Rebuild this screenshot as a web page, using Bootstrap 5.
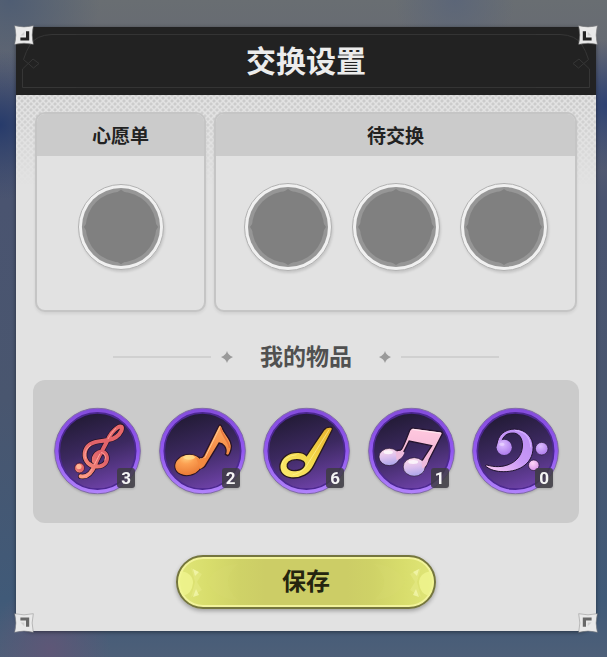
<!DOCTYPE html>
<html lang="zh-CN">
<head>
<meta charset="utf-8">
<meta name="viewport" content="width=device-width, initial-scale=1">
<title>交换设置</title>
<link href="https://cdn.jsdelivr.net/npm/bootstrap@5.3.0/dist/css/bootstrap.min.css" rel="stylesheet">
<style>
body{font-family:"Noto Sans CJK SC",sans-serif;color:#222;min-height:100vh;
 background:
 radial-gradient(circle at 0 125px,#273b6b 0,rgba(39,59,107,0) 75px),
 radial-gradient(circle at 100% 105px,#2e4273 0,rgba(46,66,115,0) 65px),
 radial-gradient(ellipse at 50px 650px,#5e5777 0,rgba(94,87,119,0) 60px),
 radial-gradient(circle at 10px 0,#4f5d73 0,rgba(79,93,115,0) 90px),
 radial-gradient(circle at 455px 0,#5c6678 0,rgba(92,102,120,0) 60px),
 linear-gradient(#696e72 0,#656873 70px,#4a5470 200px,#49566f 400px,#405a78 600px,#4d5f78 657px)}
.dialog-panel{margin:27px 11px 26px 16px;background:#e2e2e2;border-radius:18px;box-shadow:0 1px 4px rgba(0,0,0,.45)}
.dialog-top{height:68px;background:#222;border-radius:18px 18px 0 0}
.dialog-top h1{font-size:30px;font-weight:700;line-height:64px;color:#ececec}
.top-frame{inset:0}
.top-frame svg{width:60px;height:68px;flex:none}
.top-frame i{height:54px;margin-top:7px;border:solid #343434;border-width:1px 0}
.flip-x{transform:scaleX(-1)}
.flip-y{transform:scaleY(-1)}
.flip-xy{transform:scale(-1)}
.stud{width:20px;height:20px;z-index:2;color:#222}
.stud-t{top:-2px}.stud-b{bottom:-2px;color:#686868}.stud-l{left:-2px}.stud-r{right:-2px}
.dots{inset:68px 0 auto 0;height:90px;
 background:radial-gradient(circle,#c9c9c9 1px,transparent 2px) 0 0/6px 6px,radial-gradient(circle,#c9c9c9 1px,transparent 2px) 3px 3px/6px 6px;
 -webkit-mask-image:linear-gradient(#000,transparent);mask-image:linear-gradient(#000,transparent)}
.dialog-main{padding:17px 17px 22px}
.boxes{display:grid;grid-template-columns:171fr 363fr;gap:8px;padding:0 2px}
.box{border:2px solid #c5c5c5;border-radius:10px;background:#e2e2e2;box-shadow:0 2px 3px rgba(0,0,0,.07);height:200px}
.box h2{margin:0;background:#cbcbcb;border-radius:8px 8px 0 0;font-size:19px;font-weight:700;line-height:42px}
.slots{gap:20px;padding-top:27px}
.slot-btn{border:0;padding:0;background:none;border-radius:50%;line-height:0;filter:drop-shadow(1px 2px 1px rgba(0,0,0,.12))}
.slot-btn svg{width:88px;height:88px}
.slot-small svg{width:86px;height:86px;margin-top:1px}
.heading{margin-top:28px;gap:10px;color:#9a9a9a}
.heading i{width:98px;height:2px;background:#d0d0d0}
.heading svg{width:12px;height:12px}
.heading h2{font-size:23px;font-weight:700;line-height:30px;padding-bottom:4px;color:#505050;margin:0 17px}
.bag{margin-top:6px;padding:27px 20px 28px 21px;background:#cbcbcb;border-radius:12px}
.item-btn{border:0;padding:0;background:none;border-radius:50%;line-height:0;filter:drop-shadow(0 1px 1px rgba(0,0,0,.2))}
.item-btn svg{width:87px;height:88px}
.count{right:6px;bottom:7px;padding:0 4px;border-radius:3px;background:rgba(62,59,67,.86);color:#f4f4f4;font:700 17px/20px Roboto,sans-serif}
.save{width:260px;height:54px;margin-top:32px;border:2px solid #74753e;border-radius:27px;overflow:hidden;
 color:#25250f;font-size:24px;font-weight:700;line-height:46px;
 background:linear-gradient(90deg,#e0e678,#d8dd6c 12%,#cfd267 24%,#cccd66 34%,#cccd66 66%,#cfd267 76%,#d8dd6c 88%,#e0e678);
 box-shadow:inset 0 0 0 2px #f2f39c,0 2px 4px rgba(0,0,0,.3)}
.save svg{top:0;width:60px;height:50px}
.save span{padding-bottom:4px}
</style>
<script src="https://cdn.jsdelivr.net/npm/bootstrap@5.3.0/dist/js/bootstrap.bundle.min.js"></script>
</head>
<body>
<svg width="0" height="0" class="position-absolute" aria-hidden="true">
 <defs>
  <linearGradient id="disc" x1=".3" y1="0" x2=".6" y2="1"><stop offset="0" stop-color="#211a33"/><stop offset=".5" stop-color="#3c2960"/><stop offset="1" stop-color="#6e42a8"/></linearGradient>
  <linearGradient id="rim" x1="0" y1="0" x2="0" y2="1"><stop offset="0" stop-color="#844cdc"/><stop offset=".5" stop-color="#9258f0"/><stop offset="1" stop-color="#b183fb"/></linearGradient>
  <linearGradient id="red" x1="1" y1="0" x2="0" y2="1"><stop offset="0" stop-color="#e8686a"/><stop offset=".55" stop-color="#e0626a"/><stop offset="1" stop-color="#ff9c80"/></linearGradient>
  <linearGradient id="orange" x1="0" y1="0" x2="0" y2="1"><stop offset="0" stop-color="#ffa860"/><stop offset="1" stop-color="#ee7c38"/></linearGradient>
  <radialGradient id="orangeHead" cx=".5" cy=".15" r=".85"><stop offset="0" stop-color="#ffd080"/><stop offset=".35" stop-color="#fca052"/><stop offset="1" stop-color="#e87834"/></radialGradient>
  <linearGradient id="yellow" x1="0" y1="1" x2="1" y2="0"><stop offset="0" stop-color="#fcec70"/><stop offset=".5" stop-color="#f2d648"/><stop offset="1" stop-color="#e8b02e"/></linearGradient>
  <linearGradient id="pink" x1="0" y1="0" x2="0" y2="1"><stop offset="0" stop-color="#ffc8de"/><stop offset="1" stop-color="#eeb0d4"/></linearGradient>
  <linearGradient id="pinkHead" x1=".4" y1="0" x2=".6" y2="1"><stop offset="0" stop-color="#ffdcea"/><stop offset=".5" stop-color="#dcc0ee"/><stop offset="1" stop-color="#a9a4ea"/></linearGradient>
  <linearGradient id="lilac" x1="1" y1="0" x2="0" y2="1"><stop offset="0" stop-color="#b88cf4"/><stop offset=".5" stop-color="#c898f6"/><stop offset="1" stop-color="#ffd0f4"/></linearGradient>
  <radialGradient id="ball" cx=".4" cy=".3" r=".8"><stop offset="0" stop-color="#dcbcff"/><stop offset="1" stop-color="#a874ea"/></radialGradient>
  <radialGradient id="ballPink" cx=".4" cy=".3" r=".8"><stop offset="0" stop-color="#ffd6f6"/><stop offset="1" stop-color="#d58ae8"/></radialGradient>
 </defs>
 <symbol id="stud" viewBox="0 0 20 20"><path d="M.7 .7Q10 3.4 19.3.7Q17 10 19.3 19.3Q10 17 .7 19.3Q3.2 10 .7.7Z" fill="#e9e9e9" stroke="#8b8b8b" stroke-width=".5"/><path d="M12 6.2h3.2v9.400H6.400v-3H12z" fill="currentColor"/><path d="M6.500 10.500l3.800-3.800v3.800z" fill="#cfcfcf"/></symbol>
 <symbol id="corner" viewBox="0 0 60 68"><path d="M60 7.5H36Q20 8 14 18Q10 24 7.500 32.500L17.500 41L23 36.500L17 32L6.500 42V60.500H60" fill="none" stroke="#363636"/></symbol>
 <symbol id="slot" viewBox="0 0 88 88"><circle cx="44" cy="44" r="43.500" fill="#f0f0f0" stroke="#b0b0b0"/><circle cx="44" cy="44" r="40" fill="#969696"/><circle cx="44" cy="44" r="36" fill="#808080"/><path d="M44 6Q48 9.500 54 10.500L77.500 34Q78.500 40 82 44Q78.500 48 77.500 54L54 77.500Q48 78.500 44 82Q40 78.500 34 77.500L10.500 54Q9.500 48 6 44Q9.500 40 10.500 34L34 10.500Q40 9.500 44 6Z" fill="#808080"/></symbol>
 <symbol id="token" viewBox="27 36 262 262"><circle cx="158" cy="167" r="129" fill="url(#rim)" stroke="#7f68a8" stroke-width="3"/><circle cx="158" cy="167" r="115" fill="url(#disc)" stroke="#4c2890" stroke-width="5"/></symbol>
 <symbol id="spark" viewBox="0 0 12 12"><path d="M6 0Q7 4 12 6Q7 8 6 12Q5 8 0 6Q5 4 6 0Z" fill="currentColor"/></symbol>
 <symbol id="facet" viewBox="0 0 60 50"><path d="M3 14Q15 16 15 26Q14 37 5 39Q0 30 0 25Q0 19 3 14Z" fill="#f0f592" opacity=".75"/><path d="M13 11L24 17L19 25L24 33L13 40L17 25Z" fill="#eef294" opacity=".35"/><path d="M15 12l6 3-4 4zM15 40l6-2-3-6z" fill="#f8fab8" opacity=".65"/><path d="M60 7Q38 8 29 25Q38 42 60 43Q40 25 60 7Z" fill="#dce078" opacity=".15"/></symbol>
</svg>

<main class="dialog-panel position-relative">
 <svg class="stud stud-t stud-l position-absolute" aria-hidden="true"><use href="#stud"/></svg>
 <svg class="stud stud-t stud-r flip-x position-absolute" aria-hidden="true"><use href="#stud"/></svg>
 <svg class="stud stud-b stud-l flip-y position-absolute" aria-hidden="true"><use href="#stud"/></svg>
 <svg class="stud stud-b stud-r flip-xy position-absolute" aria-hidden="true"><use href="#stud"/></svg>
 <header class="dialog-top position-relative text-center">
  <div class="top-frame position-absolute d-flex" aria-hidden="true"><svg><use href="#corner"/></svg><i class="flex-grow-1"></i><svg class="flip-x"><use href="#corner"/></svg></div>
  <h1 class="position-relative m-0">交换设置</h1>
 </header>
 <div class="dots position-absolute" aria-hidden="true"></div>
 <div class="dialog-main position-relative">
  <div class="boxes">
   <section class="box text-center">
    <h2>心愿单</h2>
    <div class="slots d-flex justify-content-center">
     <button type="button" class="slot-btn slot-small" aria-label="心愿单"><svg><use href="#slot"/></svg></button>
    </div>
   </section>
   <section class="box text-center">
    <h2>待交换</h2>
    <div class="slots d-flex justify-content-center">
     <button type="button" class="slot-btn" aria-label="待交换 1"><svg><use href="#slot"/></svg></button>
     <button type="button" class="slot-btn" aria-label="待交换 2"><svg><use href="#slot"/></svg></button>
     <button type="button" class="slot-btn" aria-label="待交换 3"><svg><use href="#slot"/></svg></button>
    </div>
   </section>
  </div>
  <div class="heading d-flex align-items-center justify-content-center">
   <i></i><svg aria-hidden="true"><use href="#spark"/></svg><h2>我的物品</h2><svg aria-hidden="true"><use href="#spark"/></svg><i></i>
  </div>
  <section class="bag d-flex justify-content-between" aria-label="我的物品">
   <button type="button" class="item-btn position-relative">
    <svg viewBox="27 36 262 262" aria-hidden="true"><use href="#token" x="27" y="36" width="262" height="262"/>
     <defs><path id="clef" d="M147 198C145 179 160 167 173 170C188 174 190 192 182 203C171 217 145 218 130 204C113 187 117 160 135 147C150 136 174 137 190 134C209 131 222 122 230 106C235 93 228 90 219 96C203 106 193 122 186 139C177 158 163 180 151 208C140 235 124 247 107 243"/></defs>
     <g fill="none" stroke-linecap="round" stroke-linejoin="round">
      <use href="#clef" stroke="#241326" stroke-width="16"/>
      <use href="#clef" stroke="url(#red)" stroke-width="12"/>
      <path d="M213 99C202 108 196 120 190 130M137 150C123 160 117 175 122 189M170 172C182 174 184 186 180 194M165 176L149 207M141 222C133 236 124 244 114 244" stroke="#ffa49a" stroke-width="3"/>
     </g>
     <circle cx="104" cy="218" r="15" fill="url(#red)" stroke="#2b1428" stroke-width="2"/><circle cx="102" cy="214" r="8" fill="#ffb594"/></svg>
    <span class="count position-absolute">3</span>
   </button>
   <button type="button" class="item-btn position-relative">
    <svg viewBox="27 36 262 262" aria-hidden="true"><use href="#token" x="27" y="36" width="262" height="262"/>
     <path d="M148 186Q156 191 162 181L207 91Q213 84 217 97C225 119 251 137 244 162Q240 178 234 181L227 177C234 156 219 144 208 143L169 207Q164 219 152 220Z" fill="url(#orange)" stroke="#291426" stroke-width="4"/>
     <path d="M212 95C218 125 237 135 239 158" fill="none" stroke="#e87840" stroke-width="5"/>
     <path d="M151 189Q160 197 167 184L211 94" fill="none" stroke="#ffca90" stroke-width="3"/>
     <ellipse cx="115" cy="209" rx="41" ry="32" transform="rotate(-12 115 209)" fill="url(#orangeHead)" stroke="#291426" stroke-width="3"/>
     <path d="M139 187Q159 196 161 185L170 193Q162 217 151 221Z" fill="#f48b40"/>
     <ellipse cx="118" cy="186" rx="17" ry="7" fill="#ffe18d" opacity=".75"/></svg>
    <span class="count position-absolute">2</span>
   </button>
   <button type="button" class="item-btn position-relative">
    <svg viewBox="27 36 262 262" aria-hidden="true"><use href="#token" x="27" y="36" width="262" height="262"/>
     <path fill-rule="evenodd" d="M158 181L211 103Q217 95 228 95Q240 94 234 106L180 211C168 236 142 250 113 248C88 246 75 229 78 209C83 185 105 171 130 171Q148 170 158 181ZM126 193C106 193 98 205 100 214C103 225 118 227 131 225C151 221 156 206 149 199Q140 192 126 193Z" fill="url(#yellow)" stroke="#281920" stroke-width="4"/>
     <path d="M226 103L166 199Q150 232 116 239M84 210Q86 184 128 178" fill="none" stroke="#fff6a0" stroke-width="3" opacity=".6"/></svg>
    <span class="count position-absolute">6</span>
   </button>
   <button type="button" class="item-btn position-relative">
    <svg viewBox="27 36 262 262" aria-hidden="true"><use href="#token" x="27" y="36" width="262" height="262"/>
     <path d="M111 166L126 164Q131 162 153 104Q157 96 164 98L246 109Q254 111 249 119L203 209Q199 220 185 219L180 199Q189 200 195 188L219 151L151 137L131 177Q124 195 110 193Z" fill="url(#pink)" stroke="#25152f" stroke-width="4"/>
     <path d="M161 102L246 113" fill="none" stroke="#ffe4ed" stroke-width="4"/>
     <ellipse cx="91" cy="185" rx="31" ry="26" fill="url(#pinkHead)" stroke="#25152f" stroke-width="2"/>
     <ellipse cx="166" cy="215" rx="33" ry="28" fill="url(#pinkHead)" stroke="#25152f" stroke-width="2"/>
     <path d="M110 168Q125 172 128 164L137 172Q128 193 113 194ZM188 198Q197 197 200 187L209 194Q202 219 190 219Z" fill="#edbbdc"/>
     <ellipse cx="88" cy="171" rx="14" ry="6" fill="#fff" opacity=".75"/><ellipse cx="163" cy="200" rx="15" ry="6" fill="#fff" opacity=".75"/></svg>
    <span class="count position-absolute">1</span>
   </button>
   <button type="button" class="item-btn position-relative">
    <svg viewBox="27 36 262 262" aria-hidden="true"><use href="#token" x="27" y="36" width="262" height="262"/>
     <path d="M102 151C103 119 127 101 155 101C188 101 211 125 211 157C210 210 162 232 114 229C94 228 76 221 67 211Q70 207 79 211C127 223 179 199 179 149C179 128 168 112 149 113C131 113 121 123 117 137Z" fill="url(#lilac)" stroke="#20142f" stroke-width="3"/>
     <circle cx="124" cy="156" r="23" fill="url(#ball)"/><circle cx="237" cy="160" r="19" fill="url(#ball)" stroke="#20142f" stroke-width="2"/><circle cx="213" cy="210" r="16" fill="url(#ballPink)" stroke="#20142f" stroke-width="2"/>
     <ellipse cx="117" cy="147" rx="8" ry="5" fill="#ead6ff" opacity=".7"/><path d="M157 105C193 108 203 135 204 156" fill="none" stroke="#dcb9ff" stroke-width="3"/></svg>
    <span class="count position-absolute">0</span>
   </button>
  </section>
  <div class="text-center lh-1">
   <button type="button" class="save position-relative p-0"><svg class="position-absolute start-0" aria-hidden="true"><use href="#facet"/></svg><svg class="position-absolute end-0 flip-x" aria-hidden="true"><use href="#facet"/></svg><span class="position-relative d-block">保存</span></button>
  </div>
 </div>
</main>
</body>
</html>
